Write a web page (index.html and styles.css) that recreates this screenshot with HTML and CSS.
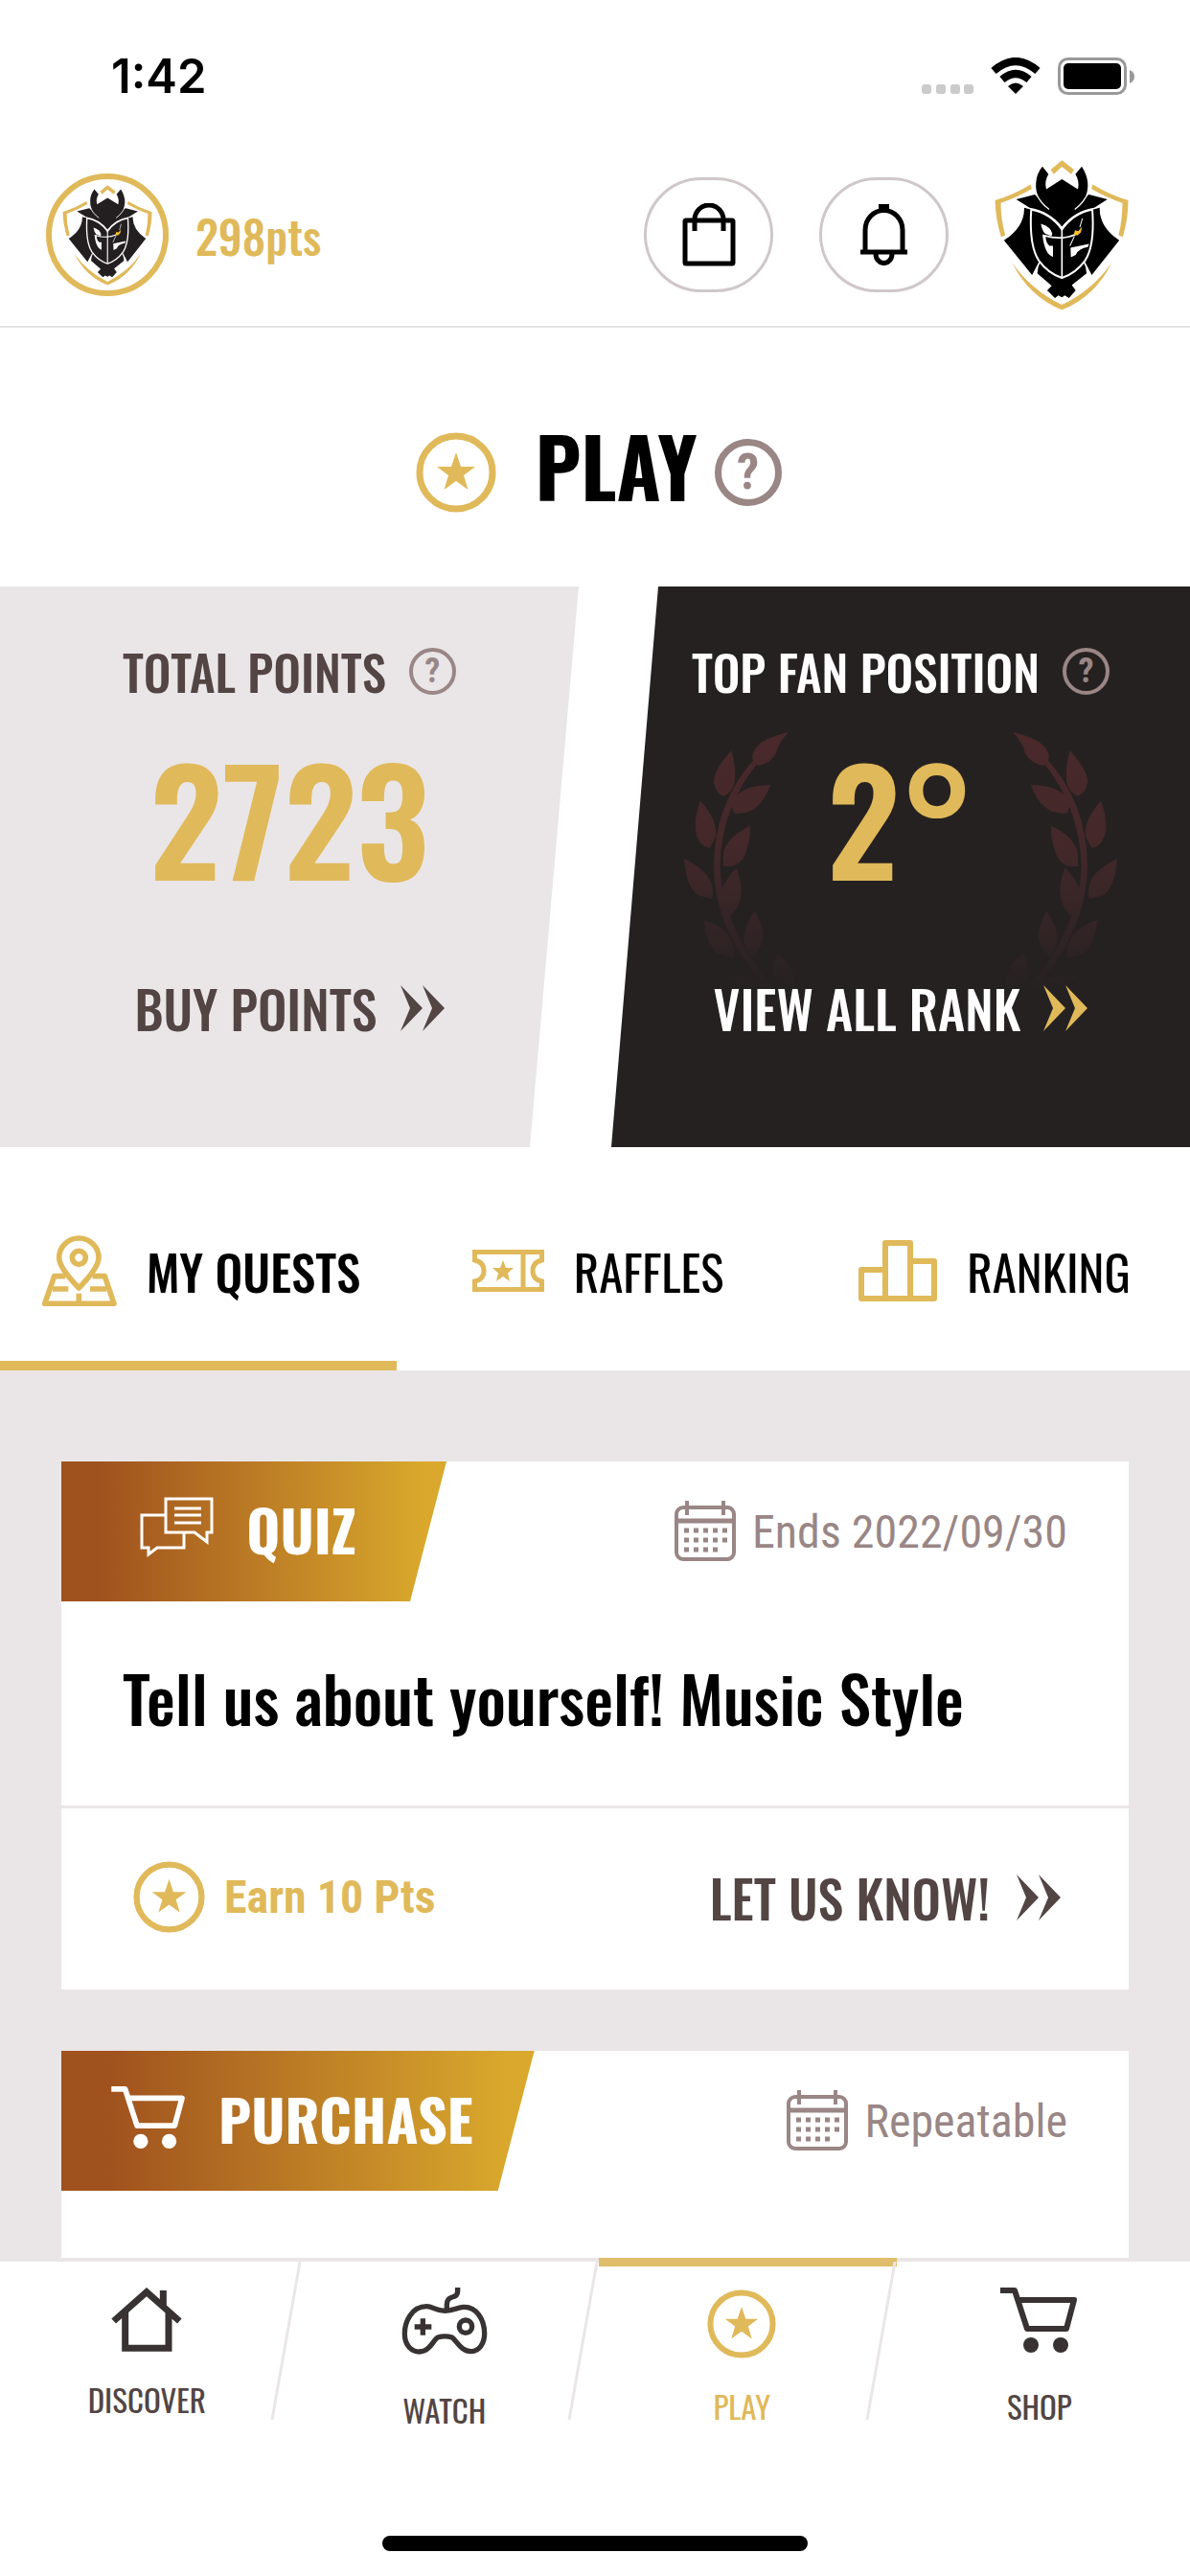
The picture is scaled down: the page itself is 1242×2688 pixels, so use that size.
FILE: index.html
```html
<!DOCTYPE html>
<html lang="en">
<head>
    <meta charset="UTF-8">
    <meta name="viewport" content="width=device-width, initial-scale=1.0">
    <title>Play</title>
    <link rel="stylesheet" href="styles.css">
</head>
<body>
    <!-- shared icons -->
    <svg class="sprite" aria-hidden="true">
        <symbol id="logo" viewBox="52 54 416 470">
            <g fill="#e0b95a">
                <path d="M226 84L261 55L299 84L290 98L261 75L235 98Z"/>
                <path d="M163 130L167 144Q120 172 70 188Q70 240 84 289L71 294Q54 240 52 180Q110 162 163 130Z"/>
                <path d="M357 130L353 144Q400 172 450 188Q450 240 438 289L451 294Q468 240 468 180Q410 162 357 130Z"/>
                <path d="M105 374Q165 460 261 506Q357 460 417 374Q365 480 261 522Q158 480 105 374Z"/>
            </g>
            <g fill="currentColor">
                <path d="M143 203L168 210L190 375L169 415L80 305Q145 262 143 203Z"/>
                <path d="M379 203L354 210L332 375L353 415L440 305Q377 262 379 203Z"/>
                <path d="M190 368H332L338 408L292 445L304 461L283 485L270 477L261 483L250 477L239 485L215 461L229 447L184 408Z"/>
                <path d="M200 74L219 98Q205 120 212 145L261 114L311 145Q317 120 303 98L323 74Q343 105 342 135Q341 152 336 167L346 162L403 177L362 203Q300 213 261 262Q222 213 160 203L118 177L176 162L188 172Q178 148 180 125Q182 95 200 74Z"/>
                <path d="M165 209Q225 220 261 271Q297 220 356 209Q364 320 334 367Q304 408 261 422Q218 408 188 367Q158 320 165 209Z" stroke="#fff" stroke-width="6"/>
            </g>
            <g fill="none" stroke="#fff" stroke-width="5">
                <path d="M176 150Q192 188 221 208M346 150Q330 188 301 208" stroke-width="4"/>
                <path d="M191 374L168 418M331 374L354 418"/>
                <path d="M261 268V420"/>
                <path d="M206 290Q261 306 304 286"/>
                <path d="M325 236L317 264M300 292L286 322" stroke-width="3"/>
            </g>
            <g fill="#fff">
                <path d="M195 253Q226 262 231 284L228 292L208 284Q200 276 195 253Z"/>
                <path d="M200 286L210 290Q210 312 222 322H233V357Q206 348 200 286Z"/>
                <path d="M288 328L346 316L342 326Q314 330 304 350L289 358Z"/>
            </g>
            <path d="M298 287L302 273L312 276L324 262L320 280L309 290Z" fill="#fbc02d"/>
        </symbol>
        <symbol id="coin" viewBox="0 0 84 84">
            <circle cx="42" cy="42" r="38" fill="none" stroke="currentColor" stroke-width="7"/>
            <path d="M42 21L47 36H62L50 45L54.500 60L42 51L29.500 60L34 45L22 36H37Z" fill="currentColor"/>
        </symbol>
        <symbol id="arrows" viewBox="0 0 46 48">
            <path d="M0 0L23 24L0 48L10 24ZM23 0L46 24L23 48L33 24Z" fill="currentColor"/>
        </symbol>
        <symbol id="calendar" viewBox="0 0 64 64">
            <g fill="none" stroke="currentColor" stroke-width="4">
                <rect x="2" y="7" width="60" height="54" rx="7"/>
                <path d="M2 21H62" stroke-width="5"/>
                <path d="M13 0V15M51 0V15"/>
                <path d="M10 31H55M10 41H55" stroke-width="5" stroke-dasharray="5 5"/>
                <path d="M10 51H45" stroke-width="5" stroke-dasharray="5 5"/>
            </g>
        </symbol>
        <symbol id="cart" viewBox="0 0 81 70">
            <path d="M0 4H15L28 44H69L77 14H19" fill="none" stroke="currentColor" stroke-width="6" stroke-linejoin="round"/>
            <circle cx="32" cy="61" r="8" fill="currentColor"/>
            <circle cx="63" cy="61" r="8" fill="currentColor"/>
        </symbol>
    </svg>

    <div class="status-bar">
        <span class="time">1:42</span>
        <div class="status-icons">
            <svg width="54" height="38" viewBox="0 0 54 38" fill="#cbcbcb">
                <rect x="0" y="28" width="10" height="10" rx="3"/>
                <rect x="15" y="28" width="10" height="10" rx="3"/>
                <rect x="30" y="28" width="10" height="10" rx="3"/>
                <rect x="44" y="28" width="10" height="10" rx="3"/>
            </svg>
            <svg width="52" height="38" viewBox="0 0 52 38">
                <g fill="none" stroke="#000" stroke-width="8">
                    <path d="M3 14Q26 -6 49 14"/>
                    <path d="M12 23Q26 11 40 23"/>
                </g>
                <path d="M18 30Q26 23 34 30L26 38Z"/>
            </svg>
            <svg width="80" height="39" viewBox="0 0 80 39">
                <rect x="1.500" y="1.500" width="69" height="36" rx="9" fill="none" stroke="#999" stroke-width="3"/>
                <rect x="6" y="6" width="60" height="27" rx="5"/>
                <path d="M75 13Q80 15 80 20Q80 25 75 27Z" fill="#999"/>
            </svg>
        </div>
    </div>

    <header class="header">
        <a href="#profile" class="profile">
            <span class="avatar"><svg><use href="#logo"/></svg></span>
            <span>298pts</span>
        </a>
        <div class="header-actions">
            <button type="button" class="round-btn" aria-label="Bag">
                <svg width="56" height="66" viewBox="0 0 56 66" fill="none" stroke="#000" stroke-width="5">
                    <rect x="3" y="18" width="50" height="45" rx="1"/>
                    <path d="M13 29V17A15 15 0 0 1 43 17V29"/>
                </svg>
            </button>
            <button type="button" class="round-btn" aria-label="Notifications">
                <svg width="49" height="64" viewBox="0 0 49 64" fill="none" stroke="#000" stroke-width="5">
                    <path d="M5 49V27A19 20 0 0 1 44 27V49M0 50H49M16 52A8 9 0 0 0 33 52"/>
                    <path d="M19 4H30" stroke-width="8"/>
                </svg>
            </button>
            <a href="#home" class="logo" aria-label="Home"><svg><use href="#logo"/></svg></a>
        </div>
    </header>

    <div class="page-title">
        <svg class="title-coin"><use href="#coin"/></svg>
        <h1>PLAY</h1>
        <button type="button" class="help help-lg">?</button>
    </div>

    <section class="stats">
        <div class="stat stat-points">
            <h2>TOTAL POINTS <button type="button" class="help">?</button></h2>
            <p class="stat-value">2723</p>
            <a href="#buy">BUY POINTS <svg class="arrows"><use href="#arrows"/></svg></a>
        </div>
        <div class="stat stat-rank">
            <svg class="laurels" viewBox="230 410 1145 710" preserveAspectRatio="none">
                <defs>
                    <linearGradient id="fade" gradientUnits="userSpaceOnUse" x1="0" y1="420" x2="0" y2="1110">
                        <stop offset="0" stop-color="#4a292b"/>
                        <stop offset="0.45" stop-color="#43282a"/>
                        <stop offset="1" stop-color="#262121"/>
                    </linearGradient>
                    <g id="branch" fill="url(#fade)">
                        <path d="M507 420Q435 438 420 465Q408 480 415 500L425 510Q458 506 474 478Q480 450 507 420Z"/>
                        <path d="M357 470Q310 522 311 555Q316 588 338 592L354 580Q378 550 357 470Z"/>
                        <path d="M460 562Q385 565 362 600Q352 620 366 638Q430 645 460 562Z"/>
                        <path d="M275 605Q256 660 265 696Q276 728 300 731L316 700Q320 655 275 605Z"/>
                        <path d="M406 672Q345 702 336 745L336 780Q380 786 394 745Q408 710 406 672Z"/>
                        <path d="M233 760Q238 838 270 858L306 867Q312 840 300 815Q282 785 233 760Z"/>
                        <path d="M370 785Q326 830 330 870Q334 900 355 912Q380 890 383 850Q383 820 370 785Z"/>
                        <path d="M285 925Q293 998 325 1016L366 1026Q366 980 340 955Q322 937 285 925Z"/>
                        <path d="M418 900Q388 948 390 980Q395 1010 412 1022Q440 1000 440 960Q435 930 418 900Z"/>
                        <path d="M340 1075Q400 1070 440 1092L452 1110Q380 1110 340 1075Z"/>
                        <path d="M478 1015Q460 1060 475 1088Q500 1115 526 1100Q522 1040 478 1015Z"/>
                        <path d="M420 490Q312 610 311 780Q312 950 446 1104L458 1098Q328 930 327 780Q330 620 430 498Z"/>
                    </g>
                </defs>
                <use href="#branch"/>
                <use href="#branch" transform="translate(1605 0) scale(-1 1)"/>
            </svg>
            <h2>TOP FAN POSITION <button type="button" class="help">?</button></h2>
            <p class="stat-value">2°</p>
            <a href="#rank">VIEW ALL RANK <svg class="arrows"><use href="#arrows"/></svg></a>
        </div>
    </section>

    <nav class="tabs">
        <a href="#quests" class="tab active">
            <svg width="78" height="74" viewBox="42 40 234 222" fill="none" stroke="currentColor" stroke-width="17" stroke-linejoin="round">
                <path d="M157 205Q95 142 95 110A62 61 0 0 1 219 110Q219 142 157 205Z"/>
                <circle cx="157" cy="110" r="21"/>
                <path d="M115 168H80L50 254H267L238 168H200M75 208H124M192 208H243M157 222V254"/>
            </svg>
            MY QUESTS
        </a>
        <a href="#raffles" class="tab">
            <svg width="75" height="44" viewBox="0 0 75 44" fill="none" stroke="currentColor" stroke-width="5">
                <path d="M2.500 2.500H72.500V11Q63 13 63 22Q63 31 72.500 33V41.500H2.500V33Q12 31 12 22Q12 13 2.500 11ZM53 2V42"/>
                <path d="M32 11L35 19H43L37 24.500L39 33L32 28L25 33L27 24.500L21 19H29Z" fill="currentColor" stroke="none"/>
            </svg>
            RAFFLES
        </a>
        <a href="#ranking" class="tab">
            <svg width="82" height="64" viewBox="0 0 82 64" fill="none" stroke="currentColor" stroke-width="6" stroke-linejoin="round">
                <path d="M3 31H28V61H3ZM28 3H54V61H28ZM54 22H79V61H54Z"/>
            </svg>
            RANKING
        </a>
    </nav>

    <main class="feed">
        <article class="card">
            <div class="card-head">
                <div class="tag">
                    <svg width="77" height="64" viewBox="0 0 77 64" fill="none" stroke="currentColor" stroke-width="3">
                        <path d="M27 2H75V37H70V47L57 37H27Z"/>
                        <path d="M27 19H2V53H9V60L18 53H46V38"/>
                        <path d="M36 12H64M36 19H64M36 27H64"/>
                    </svg>
                    QUIZ
                </div>
                <div class="card-date">
                    <svg><use href="#calendar"/></svg>
                    Ends 2022/09/30
                </div>
            </div>
            <h3>Tell us about yourself! Music Style</h3>
            <div class="card-foot">
                <div class="earn">
                    <svg><use href="#coin"/></svg>
                    Earn 10 Pts
                </div>
                <a href="#quiz">LET US KNOW! <svg class="arrows"><use href="#arrows"/></svg></a>
            </div>
        </article>

        <article class="card">
            <div class="card-head">
                <div class="tag">
                    <svg width="78" height="67"><use href="#cart"/></svg>
                    PURCHASE
                </div>
                <div class="card-date">
                    <svg><use href="#calendar"/></svg>
                    Repeatable
                </div>
            </div>
        </article>
    </main>

    <footer class="bottom-bar">
        <nav class="bottom-nav">
            <a href="#discover">
                <svg width="74" height="71" viewBox="46 50 222 213" fill="none" stroke="currentColor" stroke-width="21">
                    <path d="M54 158L157 67L260 158M90 130V243H226V130M209 62V115"/>
                </svg>
                DISCOVER
            </a>
            <a href="#watch">
                <svg width="90" height="82" viewBox="956 48 270 246" fill="none" stroke="currentColor" stroke-width="16">
                    <path d="M1035 110C988 110 966 158 966 195C966 235 990 252 1012 252C1045 252 1055 215 1070 207Q1092 200 1114 207C1130 218 1142 252 1175 251C1200 250 1216 225 1216 195C1216 150 1190 110 1150 112C1130 113 1122 124 1092 124C1062 124 1055 110 1035 110Z"/>
                    <path d="M1098 120V104Q1098 86 1115 81Q1132 77 1132 62V51M997 174H1050M1023 148V200"/>
                    <circle cx="1157" cy="173" r="20"/>
                </svg>
                WATCH
            </a>
            <a href="#play" class="active">
                <svg width="72" height="78" viewBox="0 -3 72 78"><use href="#coin" width="72" height="72"/></svg>
                PLAY
            </a>
            <a href="#shop">
                <svg width="81" height="78" viewBox="0 0 81 78"><use href="#cart" width="81" height="70"/></svg>
                SHOP
            </a>
        </nav>
        <div class="home-indicator"></div>
    </footer>
</body>
</html>
```
FILE: styles.css
```css
* {
    box-sizing: border-box;
}

body {
    display: flex;
    flex-direction: column;
    min-height: 100vh;
    margin: 0;
    background-color: #fff;
    color: #000;
    font-family: "Oswald", "Open Sans Condensed", "Liberation Sans", sans-serif;
}

h1, h2, h3, p {
    margin: 0;
}

a {
    color: inherit;
    text-decoration: none;
}

button {
    padding: 0;
    background: none;
    cursor: pointer;
}

svg {
    display: block;
    flex: none;
}

.sprite {
    position: absolute;
    width: 0;
    height: 0;
}

/* status bar */
.status-bar {
    display: flex;
    align-items: center;
    justify-content: space-between;
    height: 146px;
    padding: 12px 58px 0 116px;
}

.time {
    font-family: "Inter", sans-serif;
    font-size: 49px;
    font-weight: 600;
}

.status-icons {
    display: flex;
    align-items: center;
    gap: 18px;
}

/* header */
.header {
    display: flex;
    align-items: center;
    justify-content: space-between;
    height: 196px;
    padding: 4px 64px 0 48px;
    border-bottom: 2px solid #e4e4e4;
}

.profile {
    display: flex;
    align-items: center;
    gap: 28px;
    color: #e0b95a;
    font-size: 48px;
    font-weight: 500;
}

.avatar {
    display: flex;
    align-items: center;
    justify-content: center;
    width: 128px;
    height: 128px;
    border: 6px solid #e0b95a;
    border-radius: 50%;
    color: #231f20;
}

.avatar svg {
    width: 94px;
    height: 105px;
}

.header-actions {
    display: flex;
    align-items: center;
    gap: 48px;
}

.round-btn {
    display: flex;
    align-items: center;
    justify-content: center;
    width: 135px;
    height: 120px;
    border: 3px solid #cfc7c8;
    border-radius: 60px;
}

.logo svg {
    width: 140px;
    height: 157px;
}

/* page title */
.page-title {
    display: flex;
    align-items: center;
    justify-content: center;
    padding: 101px 0 69px 8px;
}

.page-title h1 {
    margin: 0 18px 0 40px;
    padding-bottom: 16px;
    font-size: 84px;
    font-weight: 700;
    line-height: 84px;
}

.title-coin {
    width: 84px;
    height: 84px;
    color: #e0b95a;
}

.help {
    width: 49px;
    height: 49px;
    border: 4px solid #998685;
    border-radius: 50%;
    color: #998685;
    font-family: "Roboto Condensed", "Roboto", sans-serif;
    font-size: 36px;
    font-weight: 700;
    line-height: 40px;
}

.help-lg {
    width: 70px;
    height: 70px;
    border-width: 7px;
    font-size: 52px;
    line-height: 56px;
}

/* points and rank */
.stats {
    display: grid;
    grid-template-columns: 1fr 1fr;
    gap: 34px;
}

.stat {
    position: relative;
    display: flex;
    flex-direction: column;
    align-items: center;
    padding: 56px 0 113px;
}

.stat-points {
    background-color: #eae6e7;
    color: #524544;
    clip-path: polygon(0 0, 100% 0, calc(100% - 51px) 100%, 0 100%);
}

.stat-rank {
    background-color: #262121;
    color: #fff;
    clip-path: polygon(49px 0, 100% 0, 100% 100%, 0 100%);
}

.laurels {
    position: absolute;
    top: 148px;
    left: 50%;
    width: 454px;
    height: 276px;
    transform: translateX(-50%);
}

.stat h2,
.stat a {
    position: relative;
    display: flex;
    align-items: center;
    gap: 24px;
    font-weight: 500;
    line-height: 64px;
}

.stat h2 {
    font-size: 51px;
}

.stat a {
    font-size: 54px;
}

.stat-value {
    position: relative;
    margin: 29px 0 79px;
    color: #e0b95a;
    font-size: 150px;
    font-weight: 600;
    line-height: 180px;
}

.arrows {
    width: 46px;
    height: 48px;
}

.stat-rank .arrows {
    color: #e0b95a;
}

/* tabs */
.tabs {
    display: grid;
    grid-template-columns: repeat(3, 1fr);
}

.tab {
    display: flex;
    align-items: center;
    justify-content: center;
    gap: 31px;
    height: 233px;
    padding: 34px 0 0 6px;
    border-bottom: 10px solid transparent;
    font-size: 51px;
}

.tab svg {
    color: #e0b95a;
}

.tab.active {
    border-bottom-color: #e0b95a;
    font-weight: 500;
}

/* feed */
.feed {
    flex: 1;
    display: flex;
    flex-direction: column;
    gap: 64px;
    padding: 95px 64px 0;
    background-color: #eae6e7;
}

.card {
    background-color: #fff;
}

.card:last-child {
    flex: 1;
}

.card-head {
    display: flex;
    justify-content: space-between;
    padding-right: 64px;
}

.tag {
    display: flex;
    align-items: center;
    justify-content: center;
    gap: 34px;
    min-width: 402px;
    height: 146px;
    padding: 0 64px 8px 52px;
    background: linear-gradient(to right, #a0521e 10%, #d9a82c 94%);
    color: #fff;
    font-size: 60px;
    font-weight: 700;
    clip-path: polygon(0 0, 100% 0, calc(100% - 38px) 100%, 0 100%);
}

.card-date {
    display: flex;
    align-items: center;
    gap: 17px;
    color: #998685;
    font-family: "Roboto Condensed", "Roboto", sans-serif;
    font-size: 48px;
}

.card-date svg {
    width: 64px;
    height: 64px;
}

.card h3 {
    padding: 50px 64px 64px;
    border-bottom: 3px solid #eae6e7;
    font-size: 67px;
    font-weight: 500;
    line-height: 99px;
}

.card-foot {
    display: flex;
    align-items: center;
    justify-content: space-between;
    height: 189px;
    padding: 0 71px 4px 75px;
}

.earn {
    display: flex;
    align-items: center;
    gap: 20px;
    color: #e0b95a;
    font-family: "Roboto Condensed", "Roboto", sans-serif;
    font-size: 48px;
    font-weight: 700;
}

.earn svg {
    width: 75px;
    height: 75px;
}

.card-foot a {
    display: flex;
    align-items: center;
    gap: 28px;
    color: #524544;
    font-size: 54px;
    font-weight: 500;
}

/* bottom navigation */
.bottom-bar {
    border-top: 4px solid #eae6e7;
    background-color: #fff;
}

.bottom-nav {
    display: grid;
    grid-template-columns: repeat(4, 1fr);
}

.bottom-nav a {
    position: relative;
    display: flex;
    flex-direction: column;
    align-items: center;
    gap: 23px;
    padding: 26px 4px 0 0;
    color: #524544;
    font-size: 33px;
    line-height: 48px;
}

.bottom-nav svg {
    color: #383232;
}

.bottom-nav a.active,
.bottom-nav .active svg {
    color: #e0b95a;
}

.bottom-nav a.active::before {
    content: "";
    position: absolute;
    top: -4px;
    left: 4px;
    width: 100%;
    height: 9px;
    background-color: #e0bd6a;
}

.bottom-nav a:not(:last-child)::after {
    content: "";
    position: absolute;
    top: 0;
    right: 11px;
    width: 3px;
    height: 165px;
    background-color: #eae6e7;
    transform: skewX(-10deg);
}

.home-indicator {
    width: 444px;
    height: 16px;
    margin: 107px auto 26px;
    border-radius: 8px;
    background-color: #000;
}
```
